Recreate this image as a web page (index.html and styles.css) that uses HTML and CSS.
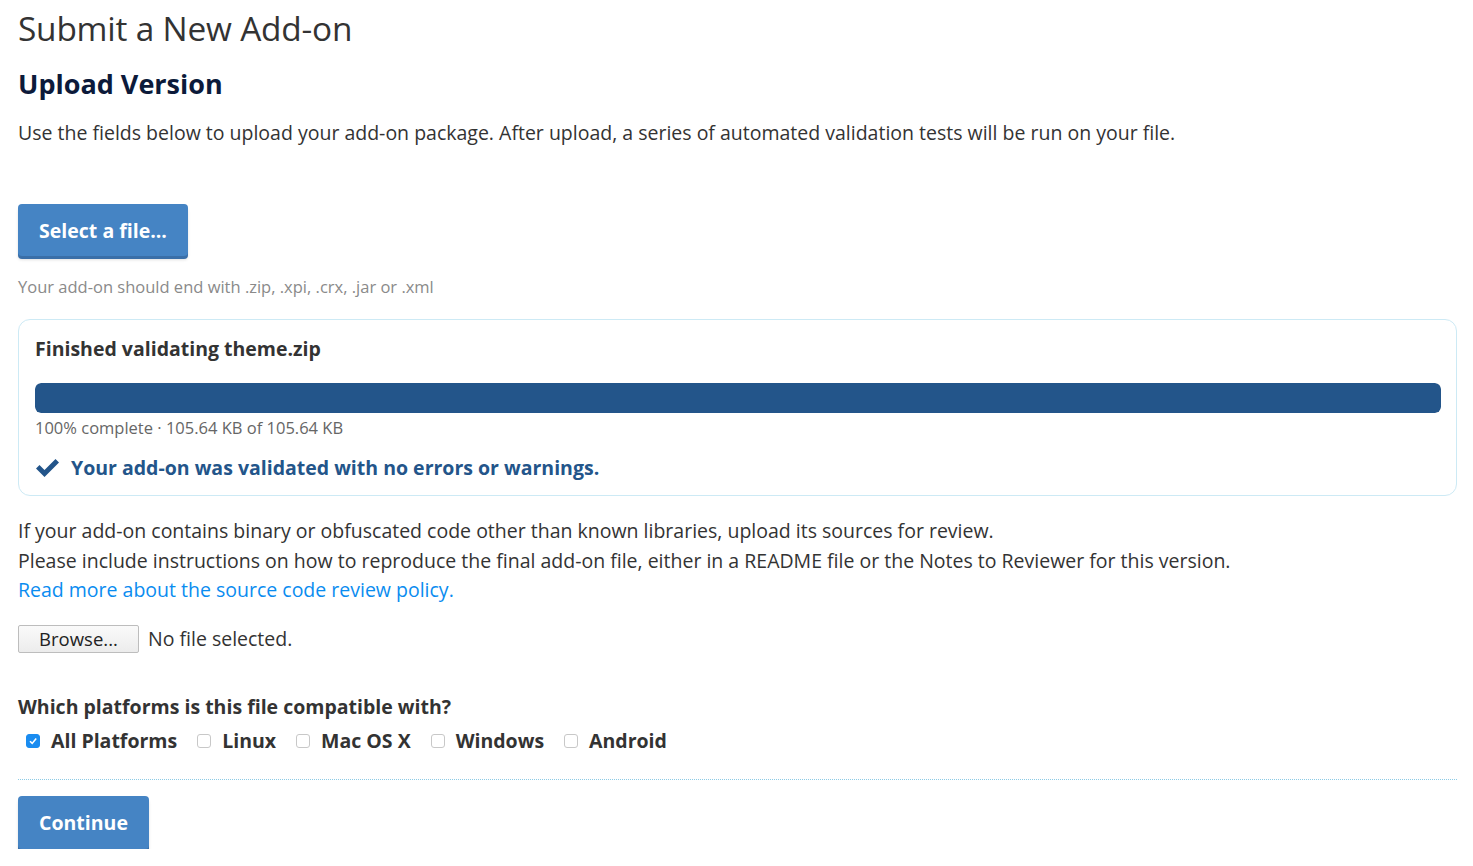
FILE: index.html
```html
<!DOCTYPE html>
<html>
<head>
<meta charset="utf-8">
<link rel="stylesheet" href="styles.css">
</head>
<body>
<div class="page">
  <h1 class="title">Submit a New Add-on</h1>
  <h2 class="subtitle">Upload Version</h2>
  <p class="intro">Use the fields below to upload your add-on package. After upload, a series of automated validation tests will be run on your file.</p>
  <button class="btn btn-select">Select a file...</button>
  <p class="hint">Your add-on should end with .zip, .xpi, .crx, .jar or .xml</p>
  <div class="status-box">
    <h3 class="status-title">Finished validating theme.zip</h3>
    <div class="progress"><div class="progress-fill" style="width:100%"></div></div>
    <div class="progress-text">100% complete · 105.64 KB of 105.64 KB</div>
    <div class="result">
      <svg class="check" width="25" height="20" viewBox="0 0 25 20"><path d="M1 10.5 L4.5 7 L9.5 12 L20.5 1 L24 4.5 L9.5 19 Z" fill="#23558a"/></svg>
      <span>Your add-on was validated with no errors or warnings.</span>
    </div>
  </div>
  <div class="source">
    <p>If your add-on contains binary or obfuscated code other than known libraries, upload its sources for review.</p>
    <p>Please include instructions on how to reproduce the final add-on file, either in a README file or the Notes to Reviewer for this version.</p>
    <p><a href="#" class="link">Read more about the source code review policy.</a></p>
  </div>
  <div class="file-row">
    <span class="browse">Browse...</span>
    <span class="nofile">No file selected.</span>
  </div>
  <h3 class="platforms-title">Which platforms is this file compatible with?</h3>
  <div class="platforms">
    <label class="plat"><span class="cb cb-on"><svg width="10" height="10" viewBox="0 0 10 10"><path d="M2 5.2 L4.2 7.4 L8.2 2.6" stroke="#fff" stroke-width="1.6" fill="none"/></svg></span>All Platforms</label>
    <label class="plat"><span class="cb"></span>Linux</label>
    <label class="plat"><span class="cb"></span>Mac OS X</label>
    <label class="plat"><span class="cb"></span>Windows</label>
    <label class="plat"><span class="cb"></span>Android</label>
  </div>
  <div class="divider"></div>
  <button class="btn btn-continue">Continue</button>
</div>
</body>
</html>
```
FILE: styles.css
```css
* { box-sizing: border-box; }
html, body { margin: 0; padding: 0; background: #fff; }
body { font-family: "Open Sans", "Noto Sans", sans-serif; color: #333; }
.page { padding: 0 16px 0 18px; display: flex; flex-direction: column; align-items: flex-start; }
.title { font-size: 33.4px; font-weight: 400; color: #333; margin: 6px 0 0; line-height: 44px; letter-spacing: -0.2px; }
.subtitle { font-size: 27px; font-weight: 700; color: #0c1a3a; margin: 16px 0 0; line-height: 36px; }
.intro { font-size: 19.5px; line-height: 28px; margin: 17px 0 0; color: #333; }
.btn { font-family: "Open Sans", sans-serif; font-weight: 700; font-size: 19.5px; color: #fff; background: #4584c4; border: none; border-radius: 4px; box-shadow: 0 3px 0 #3a6fa8, 0 4px 3px rgba(0,0,0,0.12); cursor: pointer; }
.btn-select { margin-top: 57px; width: 170px; height: 52px; padding: 0; }
.hint { font-size: 16.5px; color: #8a8a8a; margin: 20px 0 0; line-height: 22px; }
.status-box { margin-top: 21px; width: 100%; border: 1.5px solid #cdeaf5; border-radius: 12px; padding: 15px 15px 14px 16px; }
.status-title { margin: 0; font-size: 19.5px; font-weight: 700; line-height: 28px; color: #333; }
.progress { margin-top: 20px; height: 30px; width: 100%; background: #e6e6e6; border-radius: 6px; overflow: hidden; }
.progress-fill { height: 100%; background: #23558a; border-radius: 6px; }
.progress-text { margin-top: 4px; font-size: 16.5px; color: #666; line-height: 22px; }
.result { margin-top: 16px; display: flex; align-items: center; gap: 11px; color: #23558a; font-weight: 700; font-size: 19.5px; line-height: 26px; }
.check { flex: none; }
.source { margin-top: 20px; }
.source p { margin: 0; font-size: 19.5px; line-height: 29.5px; color: #333; }
.link { color: #0a8cf0; text-decoration: none; }
.file-row { margin-top: 20px; display: flex; align-items: center; gap: 9px; }
.browse { display: inline-block; width: 121px; height: 28px; border: 1px solid #bdbdbd; background: linear-gradient(#fafafa, #ececec); font-size: 18.5px; line-height: 26px; text-align: center; color: #222; border-radius: 2px; }
.nofile { font-size: 19.5px; color: #333; }
.platforms-title { margin: 40px 0 0; font-size: 19.5px; font-weight: 700; line-height: 28px; color: #333; }
.platforms { margin-top: 6px; display: flex; gap: 20px; padding-left: 8px; }
.plat { display: flex; align-items: center; gap: 11px; font-size: 19.5px; font-weight: 700; line-height: 28px; color: #333; }
.cb { width: 14px; height: 14px; border: 1px solid #c8c8c8; border-radius: 3px; background: #fff; display: inline-flex; align-items: center; justify-content: center; }
.cb-on { background: #1a8cf0; border-color: #1a8cf0; }
.divider { margin-top: 24px; width: 100%; border-top: 1.5px dotted #8ccbe6; }
.btn-continue { margin-top: 16px; width: 131px; height: 53px; padding: 0; }
```
